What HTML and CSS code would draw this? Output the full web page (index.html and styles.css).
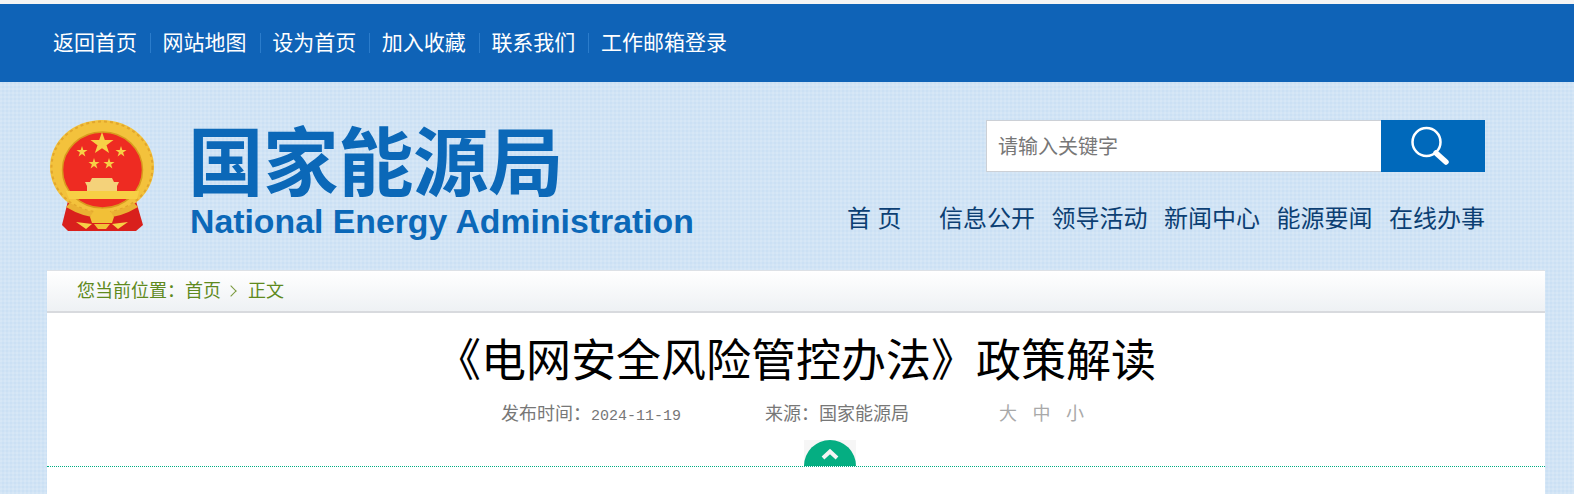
FILE: index.html

```html
<!DOCTYPE html>
<html>
<head>
    <meta charset="utf-8">
    <title>《电网安全风险管控办法》政策解读</title>
    <link rel="stylesheet" href="styles.css">
</head>
<body>
    <div class="topbar">
        <a>返回首页</a>
        <a>网站地图</a>
        <a>设为首页</a>
        <a>加入收藏</a>
        <a>联系我们</a>
        <a>工作邮箱登录</a>
    </div>

    <div class="header">
        <div class="logo">
            <svg class="emblem" width="108" height="114" viewBox="0 0 108 114">
                <path d="M20 82 L14 106 L20 112 H88 L95 106 L88 82 Z" fill="#d9201c"/>
                <ellipse cx="54" cy="48" rx="52" ry="47" fill="#f3c23c"/>
                <ellipse cx="54" cy="48" rx="50.500" ry="45.500" fill="none" stroke="#e2a62c" stroke-width="2" stroke-dasharray="3 3"/>
                <ellipse cx="54.500" cy="51" rx="40" ry="38" fill="#ee2b22" stroke="#d99a1e" stroke-width="1.500"/>
                <polygon points="54,13 56.800,21 65.500,21 58.500,26.200 61.100,34 54,29.300 46.900,34 49.500,26.200 42.500,21 51.200,21" fill="#f7d046"/>
                <polygon points="34,27 35.300,31 39.500,31 36.100,33.400 37.400,37.500 34,35 30.600,37.500 31.900,33.400 28.500,31 32.700,31" fill="#f7d046"/>
                <polygon points="73,27 74.300,31 78.500,31 75.100,33.400 76.400,37.500 73,35 69.600,37.500 70.900,33.400 67.500,31 71.700,31" fill="#f7d046"/>
                <polygon points="46,39 47.300,43 51.500,43 48.100,45.400 49.400,49.500 46,47 42.600,49.500 43.900,45.400 40.500,43 44.700,43" fill="#f7d046"/>
                <polygon points="61,39 62.300,43 66.500,43 63.100,45.400 64.400,49.500 61,47 57.600,49.500 58.900,45.400 55.500,43 59.700,43" fill="#f7d046"/>
                <path d="M44 59 H64 L66 63 H71 L69 67 V72 H39 V67 L37 63 H42 Z" fill="#f4d27a"/>
                <path d="M18 72 H91 L89 80 H21 Z" fill="#f7cf45"/>
                <path d="M22 84 Q54 103 86 84 L90 88 Q54 110 18 88 Z" fill="#eab233"/>
                <path d="M42 98 Q47 88 54 90 Q61 88 66 98 L64 104 H44 Z" fill="#f2c037"/>
                <path d="M28 103 L44 105 L38 110 Z M80 103 L64 105 L70 110 Z" fill="#f7d046"/>
                <path d="M46 105 H62 L58 110 H50 Z" fill="#f2c037"/>
            </svg>
            <div class="wordmark">
                <div class="wordmark-cn">国家能源局</div>
                <div class="wordmark-en">National Energy Administration</div>
            </div>
        </div>
        <div class="header-right">
            <div class="search">
                <div class="search-input">请输入关键字</div>
                <div class="search-btn">
                    <svg class="search-icon" width="44" height="42" viewBox="0 0 44 42">
                        <circle cx="18.500" cy="17" r="14" fill="none" stroke="#fff" stroke-width="2.500"/>
                        <path d="M28 28 L38 37" stroke="#fff" stroke-width="5.500" stroke-linecap="round"/>
                    </svg>
                </div>
            </div>
            <div class="mainnav">
                <a class="home">首 页</a>
                <a>信息公开</a>
                <a>领导活动</a>
                <a>新闻中心</a>
                <a>能源要闻</a>
                <a>在线办事</a>
            </div>
        </div>
    </div>

    <div class="panel">
        <div class="crumb">
            您当前位置：<a>首页</a><span class="crumb-arrow"></span><a>正文</a>
        </div>
        <div class="article-head">
            <h1>《电网安全风险管控办法》政策解读</h1>
            <div class="meta">
                <span class="date">发布时间：<span class="num">2024-11-19</span></span>
                <span class="source">来源：国家能源局</span>
                <span class="sizes"><a>大</a><a>中</a><a>小</a></span>
            </div>
            <div class="fold">
                <div class="fold-corner">
                    <div class="fold-tab">
                        <svg width="18" height="12" viewBox="0 0 18 12">
                            <path d="M2 10 L9 3.500 L16 10" fill="none" stroke="#f4f4f4" stroke-width="4"/>
                        </svg>
                    </div>
                </div>
            </div>
        </div>
    </div>
</body>
</html>
```

FILE: styles.css

```css
html, body { margin: 0; padding: 0; }
body {
    height: 494px;
    overflow: hidden;
    font-family: "Liberation Serif", "Noto Sans CJK SC", serif;
    background-color: #cbe0f4;
    background-image:
        repeating-linear-gradient(0deg, rgba(255,255,255,0.12) 0 2px, transparent 2px 4px),
        repeating-linear-gradient(90deg, rgba(255,255,255,0.12) 0 2px, transparent 2px 4px);
    border-top: 4px solid #f4f4f4;
    box-sizing: border-box;
}
a { color: inherit; text-decoration: none; }

.topbar {
    height: 78px;
    box-sizing: border-box;
    padding: 0 0 1px 53px;
    background: #0f63b7;
    display: flex;
    align-items: center;
    color: #fff;
    font-size: 21px;
}
.topbar a {
    line-height: 20px;
    padding-right: 13px;
    margin-right: 11.600px;
    border-right: 1px solid #2b7ccb;
}
.topbar a:last-child { border-right: none; }

.header {
    height: 188px;
    display: flex;
    justify-content: space-between;
    padding: 0 89px 0 48px;
}
.logo { display: flex; padding-top: 37px; }
.emblem { flex: none; }
.wordmark { margin-left: 32px; margin-top: 2px; color: #0b68b8; }
.wordmark-cn {
    font-family: "Noto Sans CJK SC", sans-serif;
    font-weight: 700;
    font-size: 75.500px;
    line-height: 72px;
    letter-spacing: -0.500px;
}
.wordmark-en {
    font-family: "Liberation Sans", sans-serif;
    font-weight: 700;
    font-size: 33.800px;
    line-height: 38px;
    margin-top: 9px;
    padding-left: 2px;
    white-space: nowrap;
}

.header-right { display: flex; flex-direction: column; align-items: flex-end; padding-top: 38px; }
.search { display: flex; height: 52px; }
.search-input {
    width: 394px;
    height: 50px;
    background: #fff;
    border: 1px solid #ccd0d6;
    border-right: none;
    font-family: "Noto Sans CJK SC", sans-serif;
    font-size: 20px;
    line-height: 50px;
    color: #777;
    text-indent: 11px;
}
.search-btn {
    width: 104px;
    background: #0069bb;
    display: flex;
    align-items: center;
    justify-content: center;
}
.search-icon { margin-right: 7px; }
.mainnav {
    display: flex;
    gap: 16.500px;
    margin-top: 27px;
    font-family: "Noto Sans CJK SC", sans-serif;
    font-size: 24px;
    line-height: 36px;
    color: #0c3f73;
}
.mainnav .home { margin-right: 21px; word-spacing: 1px; }

.panel {
    margin: 0 29px 0 47px;
    height: 224px;
    background: #fff;
}
.crumb {
    height: 40px;
    line-height: 40px;
    padding-left: 30px;
    font-size: 18px;
    color: #5f8a1e;
    background: linear-gradient(#fff, #eef1f4);
    border-top: 1px solid #dde1e6;
    border-bottom: 2px solid #d8dade;
    display: flex;
    align-items: center;
}
.crumb-arrow {
    width: 7px;
    height: 7px;
    margin: 0 13px 0 6px;
    border-top: 1px solid #7a9a3e;
    border-right: 1px solid #7a9a3e;
    transform: rotate(45deg);
}

.article-head { text-align: center; }
h1 {
    margin: 0;
    padding-top: 14px;
    font-family: "Noto Sans CJK SC", sans-serif;
    font-weight: 400;
    font-size: 45px;
    line-height: 62px;
    color: #000;
}
.meta {
    display: flex;
    justify-content: center;
    margin-top: 12px;
    padding-right: 7px;
    font-size: 18px;
    line-height: 26px;
    color: #777;
    white-space: nowrap;
}
.num { font-family: "Liberation Mono", monospace; font-size: 15px; }
.source { margin-left: 84px; }
.sizes { margin-left: 90px; display: flex; gap: 15.500px; color: #a9a9a9; }
.fold {
    margin-top: 10px;
    height: 26px;
    border-bottom: 1px dotted #00ad83;
    display: flex;
    justify-content: center;
}
.fold-corner { width: 52px; height: 26px; margin-left: 67px; background: #f6f6f6; }
.fold-tab {
    height: 26px;
    background: #05ae82;
    border-radius: 26px 26px 0 0;
    display: flex;
    justify-content: center;
    padding-top: 8px;
    box-sizing: border-box;
}
```
